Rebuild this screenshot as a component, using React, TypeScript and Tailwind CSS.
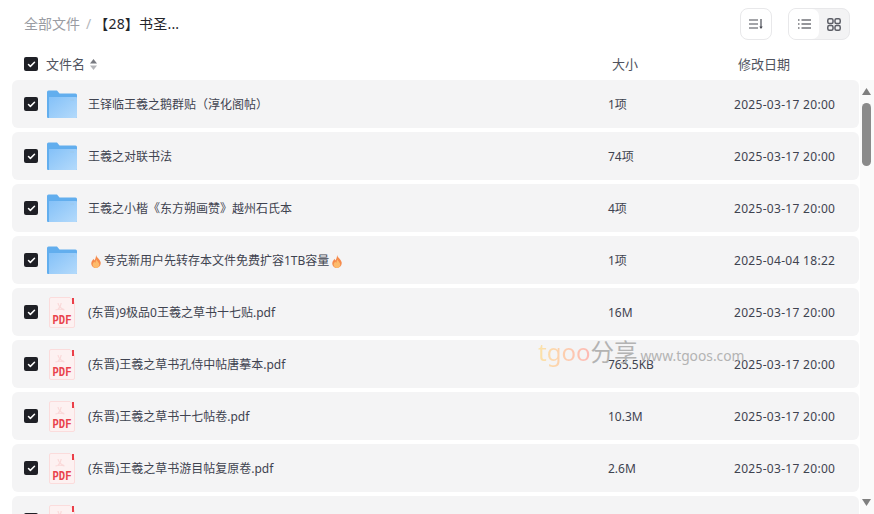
import { Check } from "lucide-react";

const FONT = "font-['Noto_Sans','Noto_Sans_CJK_SC',sans-serif]";

type Row = { name: string; size: string; date: string; type: "folder" | "pdf"; fire?: boolean };

const rows: Row[] = [
  { name: "王铎临王羲之鹅群贴（淳化阁帖）", size: "1项", date: "2025-03-17 20:00", type: "folder" },
  { name: "王羲之对联书法", size: "74项", date: "2025-03-17 20:00", type: "folder" },
  { name: "王羲之小楷《东方朔画赞》越州石氏本", size: "4项", date: "2025-03-17 20:00", type: "folder" },
  { name: "夸克新用户先转存本文件免费扩容1TB容量", size: "1项", date: "2025-04-04 18:22", type: "folder", fire: true },
  { name: "(东晋)9极品0王羲之草书十七贴.pdf", size: "16M", date: "2025-03-17 20:00", type: "pdf" },
  { name: "(东晋)王羲之草书孔侍中帖唐摹本.pdf", size: "765.5KB", date: "2025-03-17 20:00", type: "pdf" },
  { name: "(东晋)王羲之草书十七帖卷.pdf", size: "10.3M", date: "2025-03-17 20:00", type: "pdf" },
  { name: "(东晋)王羲之草书游目帖复原卷.pdf", size: "2.6M", date: "2025-03-17 20:00", type: "pdf" },
  { name: "(东晋)王羲之草书远宦帖.pdf", size: "1.2M", date: "2025-03-17 20:00", type: "pdf" },
];

function Box() {
  return (
    <span className="flex h-[14px] w-[14px] shrink-0 items-center justify-center rounded-[2px] bg-[#1f2026]">
      <Check className="h-[9px] w-[9px] text-white" strokeWidth={4} />
    </span>
  );
}

function FolderIcon() {
  return (
    <svg width="30" height="28" viewBox="0 0 30 28" className="shrink-0">
      <defs>
        <linearGradient id="fold" x1="0" y1="0" x2="1" y2="1">
          <stop offset="0" stopColor="#84c1f8" />
          <stop offset="1" stopColor="#b4dafb" />
        </linearGradient>
      </defs>
      <path d="M0 2a1.500 1.500 0 0 1 1.500-1.500h8.500l2.500 3h16a1.500 1.500 0 0 1 1.500 1.500v22a1 1 0 0 1-1 1H1a1 1 0 0 1-1-1z" fill="#62aeee" />
      <path d="M2 7h27a1 1 0 0 1 1 1v19a1 1 0 0 1-1 1H2z" fill="url(#fold)" />
      <rect x="23" y="9" width="4" height="2" fill="#9ccbf3" />
    </svg>
  );
}

function PdfIcon() {
  return (
    <svg width="26" height="31" viewBox="0 0 26 31" className="shrink-0">
      <path d="M2 .5h19l4.500 5V29a1.500 1.500 0 0 1-1.500 1.500H2A1.500 1.500 0 0 1 .5 29V2A1.500 1.500 0 0 1 2 .5z" fill="#fdf1f1" stroke="#fbdcdc" />
      <rect x="23" y="1" width="2" height="6" fill="#ea3f49" />
      <path d="M9 6c.5 3 2 5 6 6.500M9 12.500c1.500-1.500 3-4 3.200-6.500M6.500 13c3-1 6-1 9 0" fill="none" stroke="#fad9d9" strokeWidth="1.200" />
      <text x="3.500" y="27" fontSize="12" fontWeight="700" fill="#e9424c" fontFamily="'Liberation Mono',monospace" textLength="19" lengthAdjust="spacingAndGlyphs">
        PDF
      </text>
    </svg>
  );
}

function Fire() {
  return (
    <svg width="10" height="13" viewBox="0 0 12 14" preserveAspectRatio="none" className="shrink-0">
      <path d="M6 0c.5 2.500 4.500 4.500 5.500 7.500C12.300 11 9.500 14 6 14S-.3 11 .5 8C1 6 2.200 5.500 2.800 4c.7.800 1 1.500 1.200 2C5.200 4.500 6.200 2.500 6 0z" fill="#f58a4c" />
      <path d="M6 4.500c1 1.500 4 3.500 4 6 0 2-2 3.500-4 3.500s-4-1.500-4-3.500c0-1.500 1.200-2.500 1.800-3.500.5.500 1 1 1.200 1.500.5-1 1-2.500 1-4z" fill="#fdbb6c" />
    </svg>
  );
}

export default function App() {
  return (
    <div className={`relative flex h-[514px] w-[874px] flex-col overflow-hidden bg-white text-[12px] text-[#3f4350] ${FONT}`}>
      {/* 面包屑 */}
      <div className="flex h-[48px] shrink-0 items-start justify-between pl-[24px] pr-[24px] pt-[8px]">
        <div className="flex h-[32px] items-center pb-[2px] text-[14px]">
          <span className="text-[#9a9ca3]">全部文件</span>
          <span className="ml-[6px] mr-[3px] text-[#b5b7bc]">/</span>
          <span className="tracking-[0.2px] text-[#25262b]">【28】书圣...</span>
        </div>
        <div className="flex gap-[16px]">
          <button className="flex h-[32px] w-[32px] items-center justify-center rounded-[8px] border border-[#e8e8ea] bg-white">
            <svg width="14" height="12" viewBox="0 0 14 12" fill="none" stroke="#4a4c55" strokeWidth="1.200">
              <path d="M0 2h9M0 6h9M0 10h9M12 1v9" />
              <path d="M10.300 8.500L12 11l1.700-2.500z" fill="#4a4c55" stroke="none" />
            </svg>
          </button>
          <div className="flex h-[32px] w-[62px] rounded-[8px] border border-[#e8e8ea] bg-[#f3f3f4]">
            <span className="flex w-[30px] items-center justify-center rounded-[7px] bg-white">
              <svg width="13" height="10" viewBox="0 0 13 10" stroke="#2d2f36" strokeWidth="1.200">
                <path d="M0 1h1.500M3.500 1H13M0 5h1.500M3.500 5H13M0 9h1.500M3.500 9H13" />
              </svg>
            </span>
            <span className="flex flex-1 items-center justify-center">
              <svg width="14" height="13" viewBox="0 0 14 13" fill="none" stroke="#5c5e66" strokeWidth="1.500">
                <rect x=".8" y=".8" width="5.200" height="4.700" rx="1.500" />
                <rect x="8" y=".8" width="5.200" height="4.700" rx="1.500" />
                <rect x=".8" y="7.500" width="5.200" height="4.700" rx="1.500" />
                <rect x="8" y="7.500" width="5.200" height="4.700" rx="1.500" />
              </svg>
            </span>
          </div>
        </div>
      </div>

      {/* 表头 */}
      <div className="flex h-[32px] shrink-0 items-center pl-[24px] text-[13px] text-[#50535e]">
        <Box />
        <span className="ml-[8px] pt-[2px]">文件名</span>
        <svg width="7" height="11" viewBox="0 0 7 11" className="ml-[5px]">
          <path d="M3.500 0L7 4.500H0z" fill="#77797f" />
          <path d="M3.500 11L7 6.500H0z" fill="#b4b5b9" />
        </svg>
        <span className="ml-[515px] w-[126px] pt-[2px]">大小</span>
        <span className="pt-[2px]">修改日期</span>
      </div>

      {/* 文件列表 */}
      <div className="flex min-h-0 flex-1">
        <div className="flex min-w-0 flex-1 flex-col gap-[4px] overflow-hidden pl-[12px] pr-px">
          {rows.map((row) => (
            <div key={row.name} className="flex h-[48px] shrink-0 items-center rounded-[6px] bg-[#f4f4f5] pl-[12px]">
              <Box />
              <span className="ml-[9px] flex w-[30px] shrink-0 justify-center">
                {row.type === "folder" ? <FolderIcon /> : <PdfIcon />}
              </span>
              <span className="ml-[11px] flex w-[520px] shrink-0 items-center gap-[3px] pt-[2px]">
                {row.fire && <span className="ml-[3px]"><Fire /></span>}
                {row.name}
                {row.fire && <Fire />}
              </span>
              <span className="w-[126px] shrink-0 pt-[2px]">{row.size}</span>
              <span className="pt-[2px] tracking-[0.3px]">{row.date}</span>
            </div>
          ))}
        </div>

        {/* 滚动条 */}
        <div className="flex w-[14px] shrink-0 flex-col items-center bg-[#fafafa] pr-px">
          <svg width="9" height="7" viewBox="0 0 9 7" className="mt-[8px] shrink-0">
            <path d="M4.500 0L9 7H0z" fill="#7f7f7f" />
          </svg>
          <div className="mt-[8px] h-[63px] w-[9px] rounded-full bg-[#8a8a8a]" />
          <svg width="9" height="7" viewBox="0 0 9 7" className="mt-auto mb-[8px] shrink-0">
            <path d="M4.500 7L9 0H0z" fill="#7f7f7f" />
          </svg>
        </div>
      </div>

      {/* 水印 */}
      <div className="absolute left-[538px] top-[336px] flex items-baseline whitespace-nowrap leading-[32px]">
        <span className="bg-gradient-to-r from-[#fbe3a8] to-[#fdb9b4] bg-clip-text text-[24px] text-transparent">tgoo</span>
        <span className="text-[23.500px] text-[#b3b3b3]">分享</span>
        <span className="ml-[3px] text-[13.800px] text-[#b3b3b3]">www.tgoos.com</span>
      </div>
    </div>
  );
}
